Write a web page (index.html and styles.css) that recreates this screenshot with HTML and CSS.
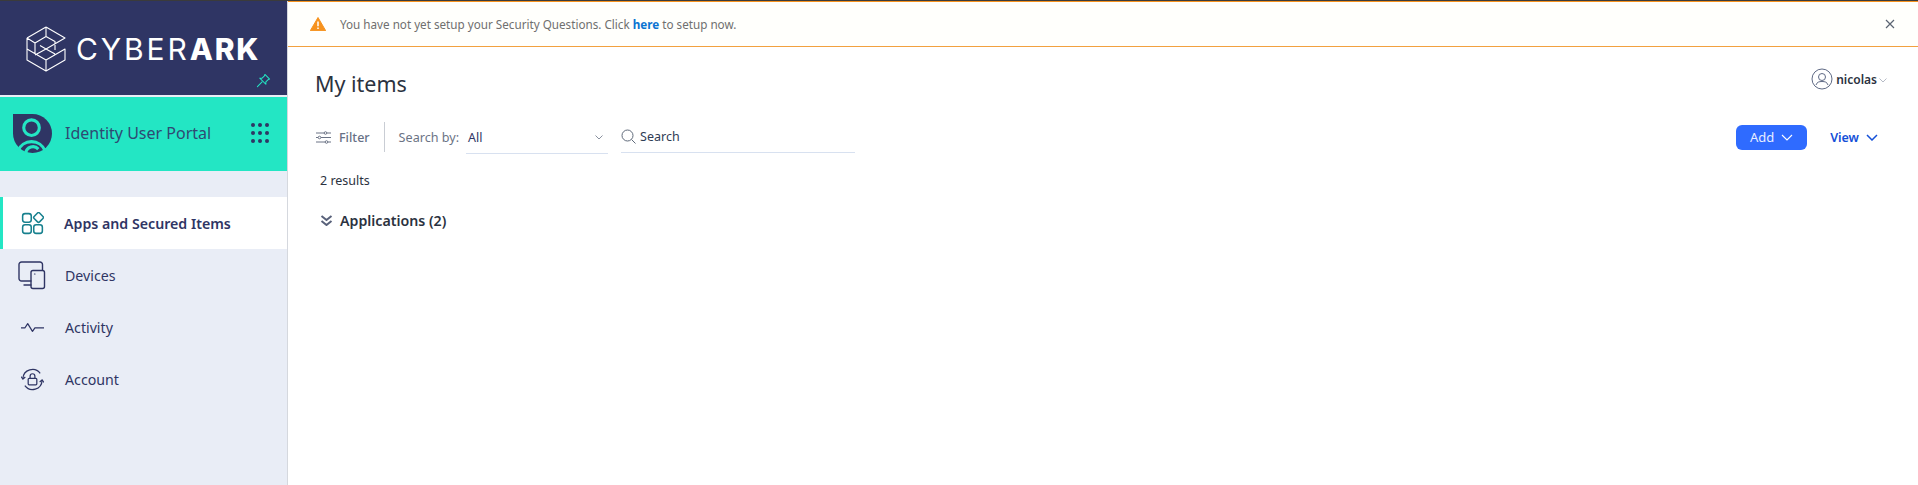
FILE: index.html
```html
<!DOCTYPE html>
<html lang="en">
<head>
<meta charset="utf-8">
<title>My items</title>
<link rel="stylesheet" href="styles.css">
</head>
<body>
<div class="topline"></div>
<div class="app">
  <aside class="sidebar">
    <div class="brand">
      <svg class="brand-mark" viewBox="0 0 40 46" fill="none" stroke="#fff" stroke-width="1.100" stroke-linejoin="round">
        <path d="M20 1 39 12 20 23 14 19.500M1 12 20 1M1 12V34L20 45 39 34V23L20 34 1 23M1 12 9 17V28M9 17 20 10.500 29 15.500V24M20 10.500V1M20 23 9 29M20 23 29 28M20 34V45"/>
      </svg>
      <span class="brand-name">CYBER<b>ARK</b></span>
      <svg class="pin" viewBox="0 0 16 16" fill="none" stroke="#23e6c4" stroke-width="1.100" stroke-linejoin="round" stroke-linecap="round">
        <path d="M9.500 1.500 14.500 6.500 13 7 10.500 9.500 10.500 12 4 5.500 6.500 5.500 9 3Z"/>
        <path d="M6.500 9.500 1.500 14.500"/>
      </svg>
    </div>
    <div class="portal">
      <svg class="portal-logo" viewBox="0 0 40 40">
        <path d="M0 0H20A20 20 0 0 1 40 20A20 20 0 0 1 20 40A20 20 0 0 1 0 20Z" fill="#2f3564"/>
        <circle cx="19" cy="14" r="8" fill="none" stroke="#23e6c4" stroke-width="3.200"/>
        <path d="M5 38A15 15 0 0 1 33 38" fill="none" stroke="#23e6c4" stroke-width="3.200"/>
        <path d="M13 40A7.500 7.500 0 0 1 26 36" fill="none" stroke="#23e6c4" stroke-width="3.200"/>
      </svg>
      <span class="portal-name">Identity User Portal</span>
      <span class="dots"><i></i><i></i><i></i><i></i><i></i><i></i><i></i><i></i><i></i></span>
    </div>
    <nav class="nav">
      <a class="nav-item active">
        <svg class="nav-icon" viewBox="0 0 24 24" fill="none" stroke="#17808e" stroke-width="1.600">
          <rect x="1.700" y="1.700" width="9" height="9" rx="2.500"/>
          <rect x="14.300" y="1.700" width="8" height="8" rx="1.500" transform="rotate(45 18.300 5.700)"/>
          <rect x="1.700" y="13.300" width="9" height="9" rx="2.500"/>
          <rect x="13.300" y="13.300" width="9" height="9" rx="2.500"/>
        </svg>
        <span>Apps and Secured Items</span>
      </a>
      <a class="nav-item">
        <svg class="nav-icon devices" viewBox="0 0 28 29" fill="none" stroke="#2f3564" stroke-width="1.400" stroke-linecap="round">
          <path d="M13 20H3.500A2.500 2.500 0 0 1 1 17.500V3.500A2.500 2.500 0 0 1 3.500 1H22A2.500 2.500 0 0 1 24.500 3.500V9"/>
          <path d="M6 24H13"/>
          <rect x="13" y="9.500" width="13.500" height="18" rx="2"/>
          <path d="M16.500 13H17" stroke-width="1.200"/>
        </svg>
        <span>Devices</span>
      </a>
      <a class="nav-item">
        <svg class="nav-icon" viewBox="0 0 24 24" fill="none" stroke="#2f3564" stroke-width="1.300" stroke-linejoin="round">
          <path d="M0 12.500H4L7 8 12 16 14.500 12.500H24"/>
        </svg>
        <span>Activity</span>
      </a>
      <a class="nav-item">
        <svg class="nav-icon" viewBox="0 0 24 24" fill="none" stroke="#2f3564" stroke-width="1.300">
          <path d="M2 11A10 10 0 0 1 20 5.500"/>
          <path d="M22 13A10 10 0 0 1 4 18.500"/>
          <path d="M0 9 2 11.500 4.500 9.500M24 15 22 12.500 19.500 14.500"/>
          <rect x="7.500" y="10.800" width="9" height="6.700" rx="1"/>
          <path d="M9.500 10.800V8.500A2.500 2.500 0 0 1 14.500 8.500V10.800"/>
        </svg>
        <span>Account</span>
      </a>
    </nav>
  </aside>
  <main class="main">
    <div class="banner">
      <svg class="warn" viewBox="0 0 16 14">
        <path d="M8 0.500 15.700 13.700H0.300Z" fill="#f6921e" stroke="#f6921e" stroke-linejoin="round"/>
        <path d="M8 4.500V9.300M8 10.600V12" stroke="#fff" stroke-width="1.500"/>
      </svg>
      <p class="banner-text">You have not yet setup your Security Questions. Click <a>here</a> to setup now.</p>
      <svg class="close" viewBox="0 0 10 10" fill="none" stroke="#5b6472" stroke-width="1.200"><path d="M1 1 9 9M9 1 1 9"/></svg>
    </div>
    <div class="content">
      <header class="title-row">
        <h1>My items</h1>
        <div class="user">
          <svg class="avatar" viewBox="0 0 22 22" fill="none" stroke="#5f6a85" stroke-width="1">
            <circle cx="11" cy="11" r="10"/>
            <circle cx="11" cy="9" r="3.500"/>
            <path d="M5 17C6 14 8 13.500 11 13.500S16 14 17 17"/>
          </svg>
          <span class="user-name">nicolas</span>
          <svg class="user-caret" viewBox="0 0 8 5" fill="none" stroke="#a3a9b8" stroke-width="0.800"><path d="M0.500 0.500 4 4 7.500 0.500"/></svg>
        </div>
      </header>
      <div class="toolbar">
        <div class="filter">
          <svg class="filter-icon" viewBox="0 0 15 13" fill="none" stroke="#6b7385" stroke-width="1">
            <path d="M0 2H8M11 2H15M0 6.500H2M5 6.500H15M0 11H9M12 11H15"/>
            <circle cx="9.500" cy="2" r="1.300"/><circle cx="3.500" cy="6.500" r="1.300"/><circle cx="10.500" cy="11" r="1.300"/>
          </svg>
          <span>Filter</span>
        </div>
        <span class="search-label">Search by:</span>
        <div class="select">
          <span>All</span>
          <svg class="select-caret" viewBox="0 0 8 5" fill="none" stroke="#6b7385" stroke-width="0.800"><path d="M0.500 0.500 4 4 7.500 0.500"/></svg>
        </div>
        <div class="search">
          <svg class="search-icon" viewBox="0 0 15 15" fill="none" stroke="#5f6a7a" stroke-width="1"><circle cx="6.500" cy="6.500" r="5.500"/><path d="M10.500 10.500 14.500 14.500"/></svg>
          <span>Search</span>
        </div>
        <div class="actions">
          <button class="add">Add
            <svg class="add-caret" viewBox="0 0 12 7" fill="none" stroke="#fff" stroke-width="1.100"><path d="M1 1 6 6 11 1"/></svg>
          </button>
          <button class="view">View
            <svg class="view-caret" viewBox="0 0 12 7" fill="none" stroke="#1450d8" stroke-width="1.500"><path d="M1 1 6 6 11 1"/></svg>
          </button>
        </div>
      </div>
      <p class="results">2 results</p>
      <div class="group">
        <svg class="group-icon" viewBox="0 0 12 11" fill="none" stroke="#58617a" stroke-width="2"><path d="M1 1 6 5 11 1M1 6 6 10 11 6"/></svg>
        <span>Applications (2)</span>
      </div>
    </div>
  </main>
</div>
</body>
</html>
```

FILE: styles.css
```css
* { box-sizing: border-box; }
html, body { margin: 0; height: 100%; overflow: hidden; background: #fff; }
body { font-family: "Noto Sans", "Open Sans", sans-serif; font-size: 13px; color: #2f3564; }
p, h1 { margin: 0; }
button { font: inherit; border: 0; background: none; padding: 0; }

.topline { height: 1px; background: #3b3b3b; }
.app { display: flex; height: 484px; }

.sidebar { width: 288px; flex: none; display: flex; flex-direction: column; background: #e9edf6; border-right: 1px solid #d5d8de; }
.brand { position: relative; height: 94px; flex: none; display: flex; align-items: center; gap: 10px; padding: 2px 0 0 26px; background: #2f3564; }
.brand-mark { width: 40px; height: 46px; flex: none; }
.brand-name { font-family: Inter, sans-serif; font-size: 30px; font-weight: 400; line-height: 30px; color: #fff; letter-spacing: 2.900px; }
.brand-name b { font-weight: 800; letter-spacing: 1.800px; }
.pin { position: absolute; right: 16px; bottom: 7px; width: 15px; height: 15px; }

.portal { margin-top: 2px; height: 74px; flex: none; display: flex; align-items: center; padding: 0 0 2px 13px; background: #23e6c4; }
.portal-logo { width: 39px; height: 39px; flex: none; }
.portal-name { margin-left: 13px; font-size: 16px; color: #2f4a73; }
.dots { margin-left: auto; margin-right: 18px; display: grid; grid-template-columns: repeat(3, 4px); gap: 4px 3px; }
.dots i { width: 4px; height: 4px; border-radius: 50%; background: #2f3564; }

.nav { padding-top: 26px; display: flex; flex-direction: column; }
.nav-item { height: 52px; display: flex; align-items: center; padding-left: 21px; font-size: 14.200px; color: #2f3564; }
.nav-item.active { background: #fff; border-left: 3px solid #23e6c4; padding-left: 18px; font-weight: 600; }
.nav-icon { width: 23px; height: 23px; flex: none; margin-right: 21px; }
.nav-item.active .nav-icon { margin-right: 20px; }
.nav-icon.devices { width: 28px; height: 29px; margin-left: -3px; margin-right: 19px; }

.main { flex: 1; min-width: 0; display: flex; flex-direction: column; }
.banner { height: 46px; flex: none; display: flex; align-items: center; padding: 0 23px 0 22px; background: #fffffc; border-top: 1px solid #f6921e; border-bottom: 1px solid #f2a13f; }
.warn { width: 16px; height: 14px; flex: none; }
.banner-text { margin-left: 14px; font-size: 11.680px; color: #6f6f6f; }
.banner-text a { font-weight: 700; color: #0b74d1; }
.close { margin-left: auto; width: 10px; height: 10px; }

.content { flex: 1; padding: 0 20px 0 27px; }
.title-row { height: 71px; display: flex; align-items: center; justify-content: space-between; }
h1 { margin-top: 1px; font-size: 21.500px; font-weight: 400; color: #2b3240; }
.user { display: flex; align-items: center; margin: -7px 11px 0 0; }
.avatar { width: 22px; height: 22px; }
.user-name { margin-left: 3px; font-size: 12px; font-weight: 600; color: #2b3240; }
.user-caret { width: 8px; height: 5px; margin: 3px 0 0 2px; }

.toolbar { height: 36px; margin: 1px 20px 0 0; display: flex; align-items: center; }
.filter { display: flex; align-items: center; height: 30px; padding-right: 14px; border-right: 1px solid #c9cdd4; font-size: 12.500px; font-weight: 500; color: #667085; }
.filter-icon { width: 15px; height: 13px; margin: 0 8px 0 1px; }
.search-label { margin-left: 14px; font-size: 12.600px; color: #6b7385; }
.select { width: 142px; height: 31px; margin: 2px 0 0 7px; padding: 0 2px; display: flex; align-items: center; justify-content: space-between; border-bottom: 1px solid #d8e1f0; font-size: 12.500px; color: #2f3564; }
.select-caret { width: 8px; height: 5px; margin-right: 3px; }
.search { width: 234px; height: 31px; margin-left: 13px; display: flex; align-items: center; border-bottom: 1px solid #d8e1f0; font-size: 12.500px; color: #2f3c55; }
.search-icon { width: 15px; height: 15px; margin-right: 4px; }
.actions { margin-left: auto; display: flex; align-items: center; }
.add { width: 71px; height: 25px; display: flex; align-items: center; justify-content: center; gap: 7px; border-radius: 6px; background: #2f6bff; color: #e8eeff; font-size: 13px; }
.add-caret { width: 12px; height: 7px; }
.view { margin-left: 23px; display: flex; align-items: center; gap: 7px; color: #1450d8; font-size: 12.500px; font-weight: 600; }
.view-caret { width: 12px; height: 7px; }

.results { margin: 17px 0 0 5px; font-size: 12.500px; line-height: 18px; color: #2b3240; }
.group { margin: 21px 0 0 5px; display: flex; align-items: center; font-size: 14.200px; font-weight: 600; color: #2b3240; }
.group-icon { width: 13px; height: 11px; margin-right: 7px; }
```
